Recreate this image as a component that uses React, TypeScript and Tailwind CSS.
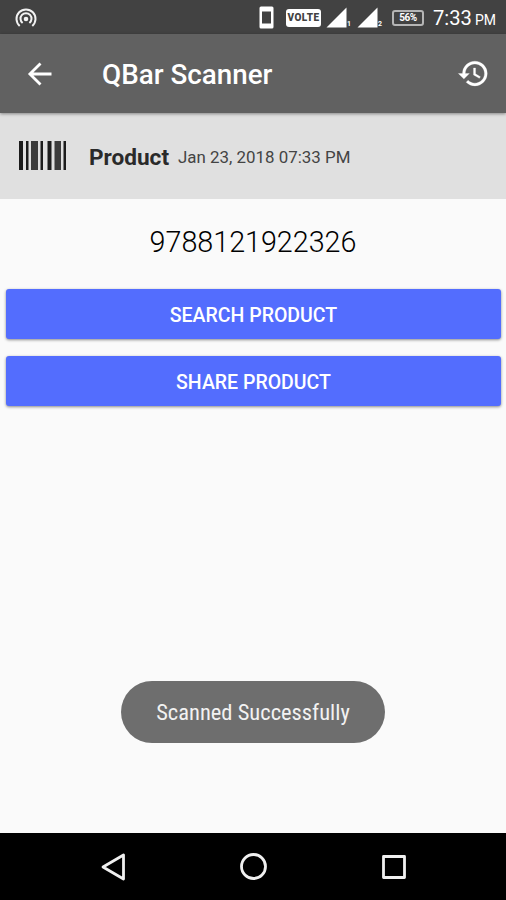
import type { ReactNode } from 'react'

function StatusBar() {
  return (
    <div className="h-[34px] shrink-0 bg-[#424242] flex items-center pt-px pl-[15px] pr-[10px] text-white">
      <svg width="22" height="22" viewBox="0 0 22 22" fill="none" stroke="#f2f2f2" strokeWidth="2">
        <path d="M4.7 19A9.5 9.5 0 1 1 17.3 19" />
        <path d="M7.6 16A5.5 5.5 0 1 1 14.4 16" />
        <circle cx="11" cy="12" r="2.3" fill="#f2f2f2" stroke="none" />
      </svg>
      <div className="ml-auto flex items-center">
        <svg width="15" height="23" viewBox="0 0 15 23">
          <rect x="0.5" y="0.5" width="14" height="22" rx="1.5" fill="#fff" />
          <rect x="3" y="5.5" width="9" height="12" fill="#424242" />
        </svg>
        <span className="ml-3 w-[35px] h-[18px] rounded-[3px] bg-white text-[#424242] text-[10px] leading-[18px] font-black text-center tracking-[0.4px]">VOLTE</span>
        <Signal sim="1" />
        <Signal sim="2" />
        <span className="ml-[9px] w-[32px] h-4 rounded-[3px] border-2 border-[#b5b5b5] text-[10px] leading-[12px] font-bold text-center tracking-[-0.4px]">56%</span>
        <span className="ml-[9px] pt-px text-[20.2px] leading-none whitespace-nowrap">7:33 <span className="-ml-[2px] text-[14px]">PM</span></span>
      </div>
    </div>
  )
}

function Signal({ sim }: { sim: string }) {
  return (
    <span className="ml-[5px] flex items-end">
      <svg width="21" height="21" viewBox="0 0 21 21">
        <path d="M20.5 0.5V20.5H0.5Z" fill="#fff" />
      </svg>
      <span className="w-[5px] text-[7px] leading-[7px] font-bold">{sim}</span>
    </span>
  )
}

function AppBar() {
  return (
    <header className="relative z-10 h-[79px] shrink-0 bg-[#616161] flex items-center pl-[26px] pr-[16px] text-white shadow-[0_1px_3px_rgba(0,0,0,0.4)]">
      <button aria-label="Back">
        <svg width="28" height="28" viewBox="0 0 28 28" fill="none" stroke="#fff" strokeWidth="2.8">
          <path d="M25.5 14H4M14.5 3.4L3.9 14L14.5 24.6" />
        </svg>
      </button>
      <h1 className="ml-[48px] pt-[2px] text-[27.8px] leading-none font-medium">QBar Scanner</h1>
      <button aria-label="History" className="ml-auto">
        <svg width="33" height="33" viewBox="0 0 24 24" fill="#fff" stroke="#fff" strokeWidth="0.2">
          <path d="M13 3a9 9 0 0 0-9 9H1l3.89 3.89.07.14L9 12H6c0-3.87 3.13-7 7-7s7 3.13 7 7-3.13 7-7 7c-1.93 0-3.68-.79-4.94-2.06l-1.42 1.42A8.95 8.95 0 0 0 13 21a9 9 0 0 0 0-18zm-1 5v5l4.28 2.54.72-1.21-3.5-2.08V8H12z" />
        </svg>
      </button>
    </header>
  )
}

function Barcode() {
  return (
    <svg width="48" height="30" viewBox="0 0 48 30">
      <g fill="#1c1c1c">
        <rect x="0" y="0" width="4" height="29" />
        <rect x="7" y="0" width="2.5" height="29" />
        <rect x="12" y="0" width="7" height="29" fill="#3c3c3c" />
        <rect x="21.5" y="0" width="2.5" height="29" />
        <rect x="28.5" y="0" width="4" height="29" />
        <rect x="35.5" y="0" width="6.5" height="29" fill="#3c3c3c" />
        <rect x="44.5" y="0" width="2.5" height="29" />
      </g>
    </svg>
  )
}

function ActionButton({ children }: { children: ReactNode }) {
  return (
    <button className="h-[50px] w-full rounded-[3px] bg-[#536dfe] pt-[3px] text-white text-[19.5px] leading-none font-medium shadow-[0_1px_3px_rgba(0,0,0,0.45)]">
      {children}
    </button>
  )
}

function NavBar() {
  return (
    <nav className="h-[67px] shrink-0 bg-black flex items-center justify-between pl-[100px] pr-[98px]">
      <svg width="28" height="30" viewBox="0 0 28 30" fill="none" stroke="#f0f0f0" strokeWidth="2.8" strokeLinejoin="round">
        <path d="M23.5 3V27L3 15Z" />
      </svg>
      <svg width="30" height="30" viewBox="0 0 30 30" fill="none" stroke="#f0f0f0" strokeWidth="2.8">
        <circle cx="14.5" cy="14.5" r="12" />
      </svg>
      <svg width="28" height="28" viewBox="0 0 28 28" fill="none" stroke="#f0f0f0" strokeWidth="2.8" strokeLinejoin="round">
        <rect x="3.5" y="3.5" width="21" height="21" />
      </svg>
    </nav>
  )
}

export default function App() {
  return (
    <div className="w-full h-[900px] flex flex-col bg-[#fafafa] overflow-hidden font-[Roboto,sans-serif]">
      <StatusBar />
      <AppBar />

      {/* Product summary */}
      <section className="h-[86px] shrink-0 bg-[#e0e0e0] flex items-center pl-[19px]">
        <Barcode />
        <span className="ml-[22px] mt-[5px] text-[22.6px] leading-none font-bold text-[#2a2a2a]">Product</span>
        <span className="ml-[9px] mt-[3px] text-[16.9px] leading-none text-[#444]">Jan 23, 2018 07:33 PM</span>
      </section>

      <main className="flex-1 flex flex-col">
        <p className="mt-[28px] text-center text-[28.7px] leading-[30px] font-light text-black">9788121922326</p>
        <div className="mt-8 pl-[6px] pr-[5px] flex flex-col gap-[17px]">
          <ActionButton>SEARCH PRODUCT</ActionButton>
          <ActionButton>SHARE PRODUCT</ActionButton>
        </div>
        <div className="mt-auto mb-[90px] self-center w-[264px] h-[62px] pt-px rounded-full bg-[#6e6e6e] flex items-center justify-center">
          <span className="text-[22.5px] leading-none text-[#f2f2f2] font-['Roboto_Condensed',Roboto,sans-serif] whitespace-nowrap">Scanned Successfully</span>
        </div>
      </main>

      <NavBar />
    </div>
  )
}
